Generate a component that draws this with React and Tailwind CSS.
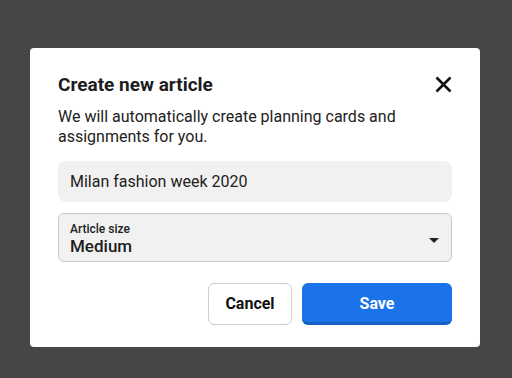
export default function App() {
  return (
    <div className="w-[512px] h-[378px] bg-[#464646] pt-[48px] pl-[30px]" style={{ fontFamily: "Roboto, 'Noto Sans', sans-serif" }}>
      <div className="w-[450px] h-[299px] bg-white rounded-[4px] px-[28px] pt-[24px]">
        <div className="flex items-center justify-between h-[26px]">
          <h1 className="text-[19px] font-bold text-[#1d1d1d] leading-[26px]">Create new article</h1>
          <svg width="17" height="17" viewBox="0 0 17 17" className="-mt-[2px]">
            <path d="M1.5 1.5 L15.5 15.5 M15.5 1.5 L1.5 15.5" stroke="#111" strokeWidth="2.6" strokeLinecap="butt" />
          </svg>
        </div>
        <p className="mt-[9px] text-[16px] leading-[20px] text-[#222]">
          We will automatically create planning cards and assignments for you.
        </p>
        <div className="mt-[14px] h-[41px] rounded-[8px] bg-[#f1f1f1] flex items-center px-[12px] text-[16px] text-[#222]">
          Milan fashion week 2020
        </div>
        <div className="mt-[11px] h-[49px] rounded-[6px] bg-[#f1f1f1] border border-[#c8c8c8] flex items-center justify-between pl-[11px] pr-[12px]">
          <div className="flex flex-col pt-[2px]">
            <span className="text-[12px] leading-[14px] font-medium text-[#222]">Article size</span>
            <span className="text-[17px] leading-[20px] font-medium text-[#1d1d1d]">Medium</span>
          </div>
          <svg width="10" height="5" viewBox="0 0 10 5" className="mt-[6px]">
            <path d="M0 0 L10 0 L5 5 Z" fill="#222" />
          </svg>
        </div>
        <div className="mt-[21px] flex justify-end gap-[10px]">
          <button className="w-[84px] h-[42px] rounded-[6px] border border-[#cfcfcf] bg-white text-[16px] font-bold text-[#111]">
            Cancel
          </button>
          <button className="w-[150px] h-[42px] rounded-[6px] bg-[#1a73e8] border-b-[3px] border-[#1560c4] text-[16px] font-bold text-white pt-[2px]">
            Save
          </button>
        </div>
      </div>
    </div>
  );
}
